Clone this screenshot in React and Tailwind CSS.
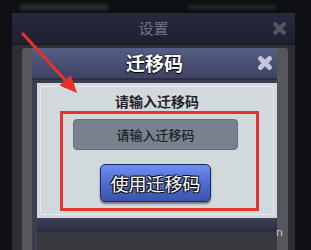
import React from 'react';

const cjk = { fontFamily: '"Noto Sans CJK SC", "Noto Sans", sans-serif' };

const XIcon = ({ color, size = 14, width = 4 }) => (
  <svg width={size} height={size} viewBox="0 0 14 14">
    <path d="M3 3 L11 11 M11 3 L3 11" stroke={color} strokeWidth={width} strokeLinecap="round" />
  </svg>
);

const App = () => {
  return (
    <div className="relative w-[311px] h-[250px] overflow-hidden bg-[#0f1014]" style={cjk}>
      {/* blurred top strip */}
      <div className="h-[13px] flex items-center px-[20px] gap-[80px] blur-[1.5px]">
        <div className="w-[90px] h-[6px] bg-[#2a2b30]" />
        <div className="ml-auto mr-[15px] w-[90px] h-[4px] bg-[#25262b]" />
      </div>

      {/* outer dialog */}
      <div className="ml-[12px] w-[283px] h-[237px] flex flex-col bg-[#2c2e33]">
        <div className="h-[32px] flex items-center justify-center relative bg-gradient-to-b from-[#262a3d] to-[#1d2031] border-b border-[#17181f]">
          <span className="text-[15px] text-[#6f7382]">设置</span>
          <div className="absolute right-[8px] top-[8px]">
            <XIcon color="#52555f" size={15} width={4} />
          </div>
        </div>

        {/* inner dialog */}
        <div className="mt-[3px] ml-[10px] w-[266px] flex-1 flex flex-col rounded-t-[3px] bg-[#55575d] pl-[10px] pr-[11px]">
          <div className="h-[32px] flex items-center justify-center relative bg-gradient-to-b from-[#575e85] to-[#3e4364] border-b-2 border-[#2c2f45]">
            <span className="text-[19px] font-bold text-white [text-shadow:0_1px_1px_#000,0_0_2px_#000]">迁移码</span>
            <div className="absolute right-[4px] top-[7px]">
              <XIcon color="#c3c6df" size={16} width={4.2} />
            </div>
          </div>
          <div className="flex-1 flex flex-col bg-[#3c3f4e] pl-[5px]">
            <div className="mt-[3px] h-[135px] bg-[#d2d9dc] p-[3px]">
              <div className="h-full border border-[#e6ebed] rounded-[2px] flex flex-col">
                <div className="h-[18px] mt-[5px] flex items-center justify-center text-[14px] font-bold text-[#222327]">
                  请输入迁移码
                </div>
                <div className="ml-[19px] mt-[1px] w-[199px] h-[100px] border-[3px] border-[#e5322b] flex flex-col items-start">
                  <div className="ml-[10px] mt-[5px] w-[165px] h-[31px] rounded-[4px] bg-[#78828f] border border-[#66707c] flex items-center justify-center text-[13px] font-medium text-[#1e2024]">
                    请输入迁移码
                  </div>
                  <button className="ml-[37px] mt-[14px] w-[111px] h-[38px] rounded-[5px] border border-[#1f2a52] bg-gradient-to-b from-[#6f8ff0] via-[#4f6cd0] to-[#3a54ac] shadow-[0_2px_2px_rgba(0,0,0,0.45)] flex items-center justify-center text-[18px] text-white [text-shadow:1px_1px_0_#111,-1px_-1px_0_#111,1px_-1px_0_#111,-1px_1px_0_#111]">
                    使用迁移码
                  </button>
                </div>
              </div>
            </div>
            <div className="h-[14px] bg-gradient-to-b from-[#3d4058] to-[#2b2d3d]" />
            <div className="flex-1 bg-[#393a3f] relative">
              <span className="absolute right-[-6px] top-[-7px] text-[11px] text-[#c8cbd0]" style={{ fontFamily: '"DejaVu Sans", sans-serif' }}>n</span>
            </div>
          </div>
        </div>
      </div>

      {/* annotation arrow */}
      <svg className="absolute left-0 top-0" width="311" height="250">
        <line x1="23" y1="34" x2="66" y2="81" stroke="#e8302a" strokeWidth="3.2" strokeLinecap="round" />
        <polygon points="77,93 59.5,85.5 71,75" fill="#e8302a" />
      </svg>
    </div>
  );
};

export default App;
